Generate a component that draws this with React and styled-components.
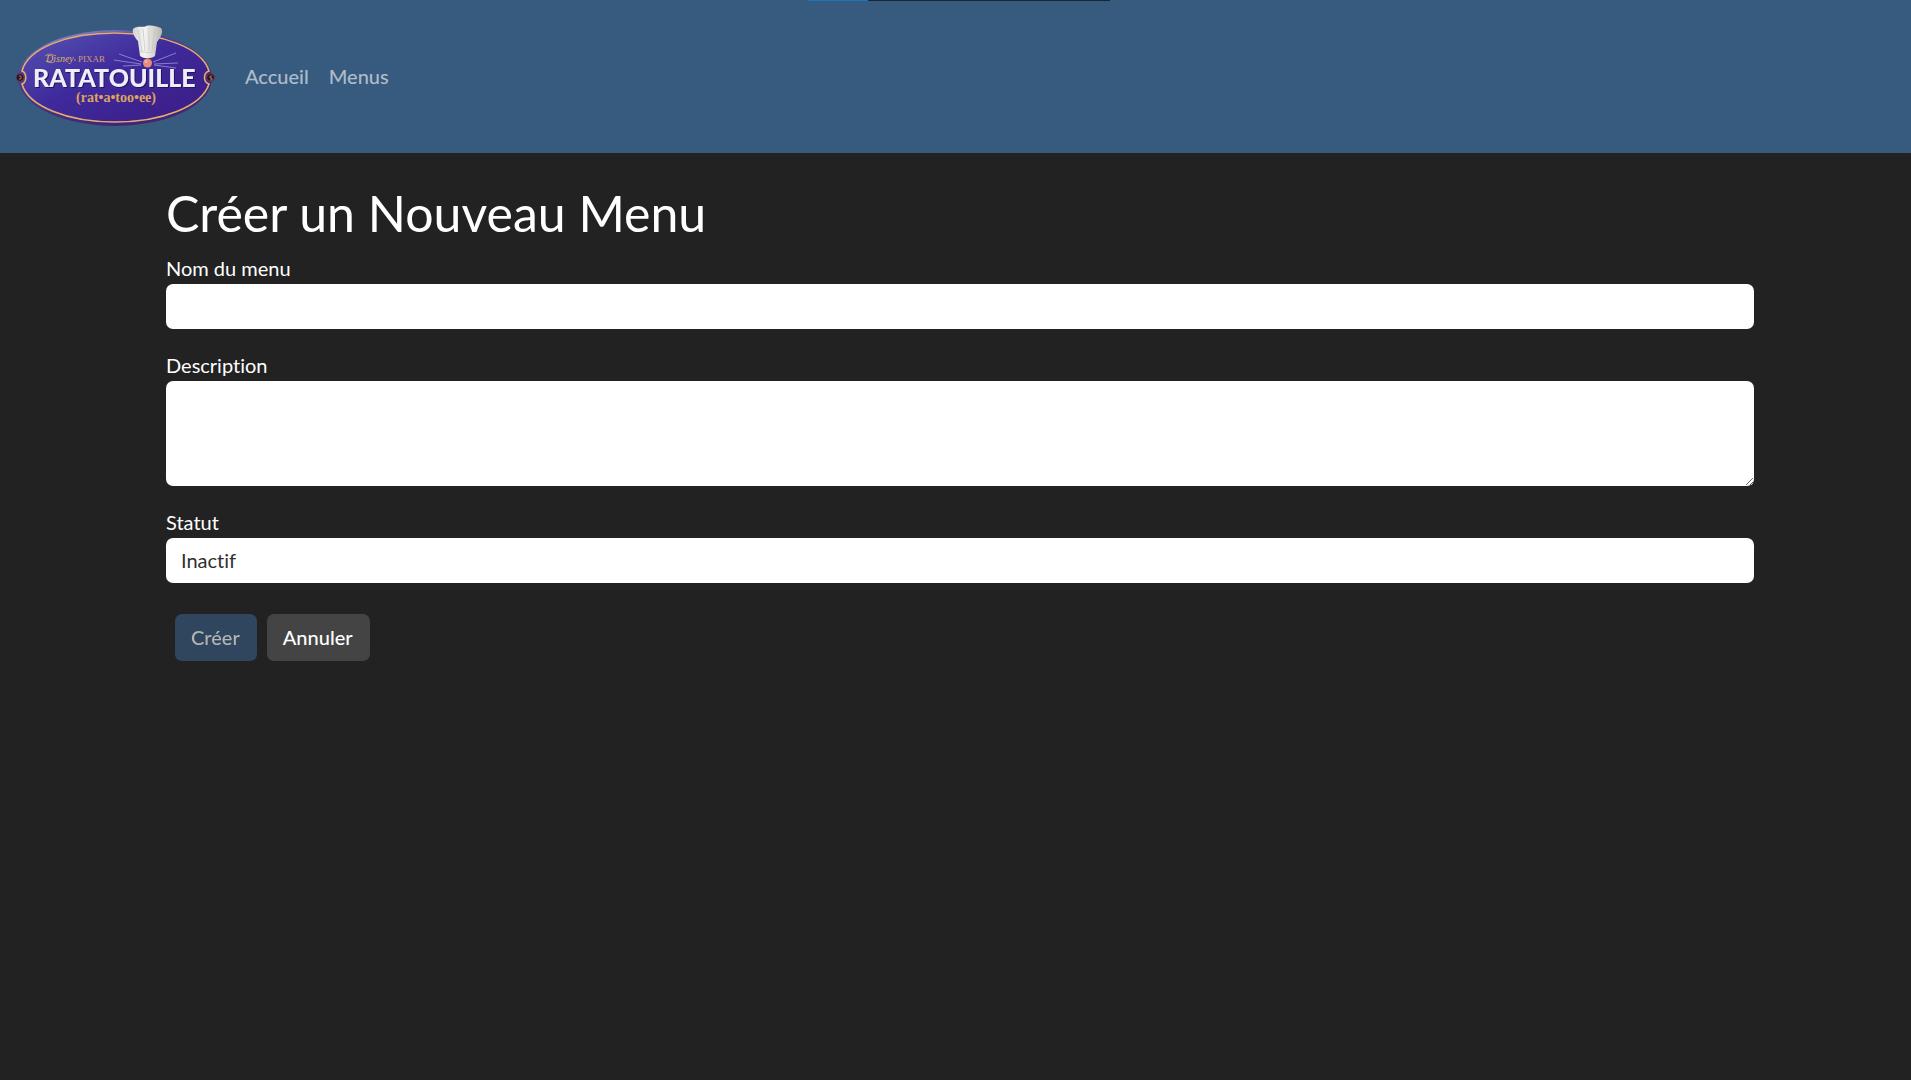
import React, { useState } from "react";
import styled, { createGlobalStyle } from "styled-components";

const GlobalStyle = createGlobalStyle`
  *, *::before, *::after {
    box-sizing: border-box;
  }

  body {
    margin: 0;
    background-color: #222222;
    color: #ffffff;
    font-family: Lato, "Liberation Sans", sans-serif;
    font-size: 20px;
    font-variant-ligatures: none;
    line-height: 30px;
  }
`;

const Page = styled.div`
  display: flex;
  flex-direction: column;
  min-height: 100vh;
`;

const TopStrip = styled.div`
  position: absolute;
  top: 0;
  left: 50%;
  display: flex;
  width: 302px;
  height: 1px;
  margin-left: -148px;
  background-color: #1b2530;
`;

const TopStripValue = styled.div`
  width: 20%;
  background-color: #1b75bc;
`;

const Navbar = styled.nav`
  display: flex;
  align-items: center;
  gap: 20px;
  padding: 24px 15px;
  background-color: #375a7f;
`;

const Brand = styled.a`
  display: block;
  height: 105px;

  svg {
    display: block;
  }
`;

const Wordmark = styled.text`
  fill: #eeeef8;
  font-family: Lato, sans-serif;
  font-size: 25px;
  font-weight: 900;
  filter: drop-shadow(1px 1px 0 #25145e);
`;

const NavList = styled.ul`
  display: flex;
  margin: 0;
  padding: 0;
  list-style: none;
`;

const NavLink = styled.a`
  display: block;
  padding: 9px 10px 11px;
  color: rgba(255, 255, 255, 0.6);
  font-weight: 500;
  text-decoration: none;

  &:hover {
    color: #ffffff;
  }
`;

const Container = styled.main`
  padding: 30px 157px 30px 166px;
`;

const Title = styled.h1`
  margin: 0 0 10px;
  font-size: 50px;
  font-weight: 400;
  line-height: 60px;
`;

const Form = styled.form`
  display: flex;
  flex-direction: column;
  gap: 21px;
`;

const Field = styled.div`
  display: flex;
  flex-direction: column;
  gap: 1px;
`;

const Label = styled.label`
  align-self: flex-start;
`;

const Input = styled.input`
  display: block;
  width: 100%;
  height: ${(props) => props.$height || 45}px;
  padding: 6px 15px 8px;
  border: 0;
  border-radius: 7px;
  background-color: #ffffff;
  color: #303030;
  font: inherit;
  font-variant-ligatures: none;
  appearance: none;
`;

const Actions = styled.div`
  display: flex;
  gap: 10px;
  padding: 10px 9px;
`;

const Button = styled.button`
  padding: 8px 17px 9px 16px;
  border: 0;
  border-radius: 7px;
  background-color: ${(props) => (props.$primary ? "#375a7f" : "#444444")};
  color: #ffffff;
  font: inherit;
  font-weight: 500;
  cursor: pointer;

  &:disabled {
    opacity: 0.65;
    cursor: default;
  }
`;

function Logo() {
  return (
    <svg width="200" height="105" viewBox="15 24 200 105" role="img" aria-label="Ratatouille">
      <defs>
        <linearGradient id="plate" x1="0" y1="0" x2="1" y2="1">
          <stop offset="0" stopColor="#5754b4" />
          <stop offset="0.45" stopColor="#3f2a9c" />
          <stop offset="1" stopColor="#3b1b82" />
        </linearGradient>
        <linearGradient id="rim" x1="0" y1="0" x2="0.5" y2="1">
          <stop offset="0" stopColor="#a3a9dc" />
          <stop offset="0.35" stopColor="#4d3f99" />
          <stop offset="1" stopColor="#43266f" />
        </linearGradient>
        <linearGradient id="hat" x1="0" y1="0" x2="1" y2="0">
          <stop offset="0" stopColor="#d4d2cf" />
          <stop offset="0.4" stopColor="#f6f5f3" />
          <stop offset="1" stopColor="#b9b5b2" />
        </linearGradient>
      </defs>
      <ellipse cx="115" cy="78" rx="97" ry="48" fill="url(#rim)" />
      <ellipse cx="116" cy="78" rx="95" ry="46" fill="url(#plate)" />
      <path
        d="M22 71C28 48 68 33 115 33S202 48 209 71C203 73 203 82 209 84C202 106 163 122 115 122S28 106 22 84C27 82 27 73 22 71Z"
        fill="none"
        stroke="#e5ae68"
        strokeWidth="1.6"
      />
      <circle cx="20" cy="77.500" r="4" fill="#281528" stroke="#6b4057" />
      <circle cx="210.500" cy="77.500" r="4" fill="#281528" stroke="#6b4057" />
      <path d="M19 76h2v3h-2M212 76h-2v2h2v2h-2" fill="none" stroke="#bc8a57" strokeWidth="0.8" />
      <g fill="none" stroke="#a7a5dc" strokeWidth="0.7">
        <path d="M142 62L119 54M141 64L114 60M141 65L123 66M153 62L176 53M154 64L178 63M154 65L176 68" />
      </g>
      <path
        d="M140 56L138 41C134 37 132 32 133 29C137 25 143 28 146 26C151 25 156 26 161 28C164 32 160 38 157 42L155 56C151 59 144 59 140 56Z"
        fill="url(#hat)"
      />
      <path
        d="M138 30L142 51M143 29L145 51M149 28V51M155 29L152 51M160 31L154 49M140 51C145 53 151 53 155 51"
        fill="none"
        stroke="#c4c1be"
        strokeWidth="0.7"
      />
      <circle cx="147.500" cy="63" r="4.500" fill="#e98d79" />
      <circle cx="146" cy="61.500" r="1.500" fill="#f6b19e" />
      <text x="46" y="62" fill="#d9b45e" fontFamily="Liberation Serif, serif" fontSize="10" fontStyle="italic">
        Disney
      </text>
      <path d="M45 56C48 53 53 54 55 56M46 61C49 63 52 63 54 62" fill="none" stroke="#d9b45e" strokeWidth="0.7" />
      <circle cx="75" cy="60" r="0.8" fill="#d9a867" />
      <text x="78" y="62" fill="#cf9b71" fontFamily="Liberation Serif, serif" fontSize="9">
        PIXAR
      </text>
      <Wordmark x="33" y="87">RATATOUILLE</Wordmark>
      <text x="116" y="102" fill="#dea45e" fontFamily="Liberation Serif, serif" fontSize="14" fontWeight="700" textAnchor="middle">
        (rat•a•too•ee)
      </text>
    </svg>
  );
}

export default function App() {
  const [name, setName] = useState("");
  const [description, setDescription] = useState("");
  const [status, setStatus] = useState("inactif");

  return (
    <Page>
      <GlobalStyle />
      <TopStrip>
        <TopStripValue />
      </TopStrip>
      <Navbar>
        <Brand href="#">
          <Logo />
        </Brand>
        <NavList>
          <li>
            <NavLink href="#">Accueil</NavLink>
          </li>
          <li>
            <NavLink href="#menus">Menus</NavLink>
          </li>
        </NavList>
      </Navbar>
      <Container>
        <Title>Créer un Nouveau Menu</Title>
        <Form onSubmit={(e) => e.preventDefault()}>
          <Field>
            <Label htmlFor="name">Nom du menu</Label>
            <Input id="name" type="text" value={name} onChange={(e) => setName(e.target.value)} />
          </Field>
          <Field>
            <Label htmlFor="description">Description</Label>
            <Input
              as="textarea"
              id="description"
              $height={105}
              value={description}
              onChange={(e) => setDescription(e.target.value)}
            />
          </Field>
          <Field>
            <Label htmlFor="status">Statut</Label>
            <Input as="select" id="status" value={status} onChange={(e) => setStatus(e.target.value)}>
              <option value="inactif">Inactif</option>
              <option value="actif">Actif</option>
            </Input>
          </Field>
          <Actions>
            <Button type="submit" $primary disabled={!name}>
              Créer
            </Button>
            <Button type="button">Annuler</Button>
          </Actions>
        </Form>
      </Container>
    </Page>
  );
}
